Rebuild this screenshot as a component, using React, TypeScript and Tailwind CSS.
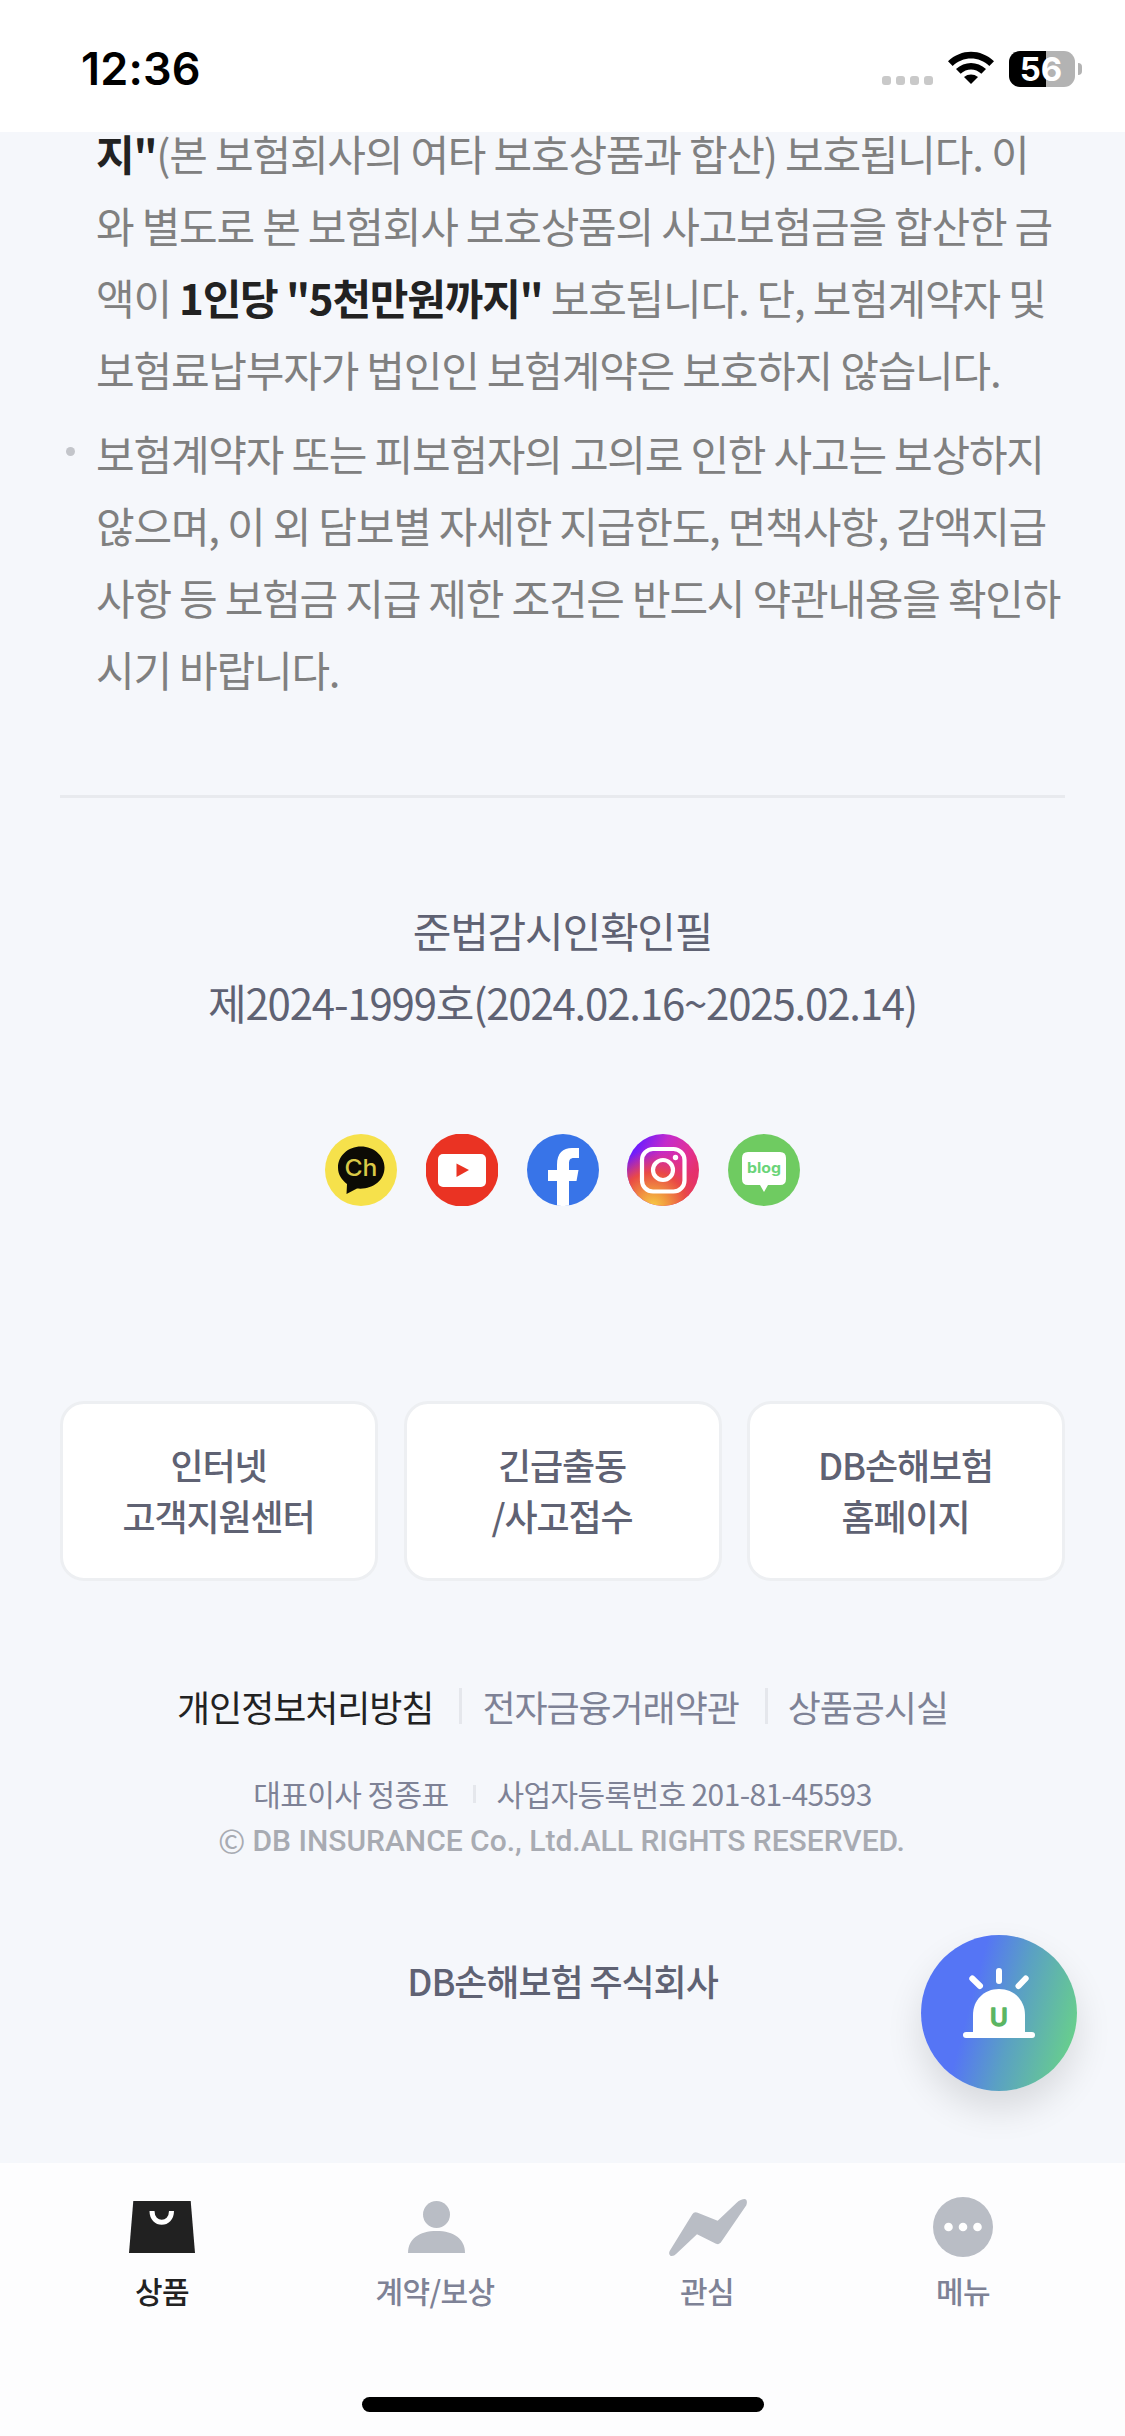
import { ReactNode } from "react";

const links = ["인터넷\n고객지원센터", "긴급출동\n/사고접수", "DB손해보험\n홈페이지"];

const StatusBar = () => (
  <header className="h-[132px] shrink-0 bg-white flex items-start justify-between pl-[81px] pr-[43px] pt-[42px]">
    <span className="font-[Inter,sans-serif] text-[45px] leading-[54px] font-semibold text-black tracking-[0.2px]">
      12:36
    </span>
    <div className="flex items-start pt-[9px]">
      <div className="flex gap-[5px] mt-[25px] mr-[15px]">
        {[0, 1, 2, 3].map((dot) => (
          <span key={dot} className="size-[9px] rounded-[3px] bg-[#c9c9c9]" />
        ))}
      </div>
      {/* Wi-Fi */}
      <svg className="w-[46px] h-[34px] mr-[15px]" viewBox="0 0 138 102">
        <path d="M0 31C40-7 98-7 138 31L124 45C94 15 44 15 14 45Z" />
        <path d="M24 54C50 30 88 30 114 54L100 68C82 51 56 51 38 68Z" />
        <path d="M48 78C61 68 77 68 90 78L69 99Z" />
      </svg>
      {/* Bateria */}
      <div className="w-[66px] h-[36px] rounded-[11px] bg-[linear-gradient(90deg,#000_56%,#b3b3b3_56%)] flex items-center justify-center">
        <span className="font-[Inter,sans-serif] font-bold text-[33px] leading-none text-white pr-[2px]">
          56
        </span>
      </div>
      <span className="w-[4px] h-[12px] mt-[12px] ml-[3px] rounded-r-full bg-[#b3b3b3]" />
    </div>
  </header>
);

const KakaoIcon = () => (
  <svg className="size-[72px]" viewBox="0 0 72 72">
    <circle cx="36" cy="36" r="36" fill="#f6e14b" />
    <path
      d="M36 12.500C23 12.500 13 22 13 33.500C13 41 17 46 22 50L21.500 60L32 54.500C47 56 59.500 47 59.500 33.500C59.500 22 49 12.500 36 12.500Z"
      fill="#0c0b05"
    />
    <text
      x="19.500"
      y="41.500"
      textLength="33"
      lengthAdjust="spacingAndGlyphs"
      className="font-[Inter,sans-serif] font-medium text-[23px]"
      fill="#d9c947"
    >
      Ch
    </text>
  </svg>
);

const YoutubeIcon = () => (
  <svg className="size-[72px]" viewBox="0 0 72 72">
    <circle cx="36" cy="36" r="36.500" fill="#ea3323" />
    <rect x="12" y="20" width="48" height="33" rx="5" fill="#fff" />
    <path d="M30.500 29.500L43 36L30.500 43Z" fill="#ea3323" />
  </svg>
);

const FacebookIcon = () => (
  <svg className="size-[72px]" viewBox="0 0 72 72">
    <circle cx="36" cy="36" r="36" fill="#3874e8" />
    <path
      d="M30 71.500V47H21V36H30V31C30 19 36 14 45 14H52V24H47C43 24 42 26 42 30V36H51.500L49.500 47H42V71.500C38 72.200 34 72.200 30 71.500Z"
      fill="#fff"
    />
  </svg>
);

const InstagramIcon = () => (
  <svg className="size-[72px]" viewBox="0 0 72 72">
    <defs>
      <linearGradient id="igBase" x1="0.1" y1="0.2" x2="0.9" y2="0.6">
        <stop offset="0" stopColor="#6a1cff" />
        <stop offset="0.4" stopColor="#c42bcb" />
        <stop offset="0.75" stopColor="#e0309b" />
        <stop offset="1" stopColor="#e5306c" />
      </linearGradient>
      <radialGradient id="igWarm" cx="0.36" cy="1" r="0.78">
        <stop offset="0" stopColor="#f7cb45" />
        <stop offset="0.25" stopColor="#f1993f" />
        <stop offset="0.6" stopColor="#e94a45" />
        <stop offset="1" stopColor="#e2306f" stopOpacity="0" />
      </radialGradient>
    </defs>
    <circle cx="36" cy="36" r="36" fill="url(#igBase)" />
    <circle cx="36" cy="36" r="36" fill="url(#igWarm)" />
    <rect x="15" y="15" width="42.500" height="42.500" rx="11" fill="none" stroke="#fff" strokeWidth="4.200" />
    <circle cx="36" cy="36" r="10" fill="none" stroke="#fff" strokeWidth="4.200" />
    <circle cx="48.500" cy="23.500" r="2.700" fill="#fff" />
  </svg>
);

const BlogIcon = () => (
  <svg className="size-[72px]" viewBox="0 0 72 72">
    <circle cx="36" cy="36" r="36" fill="#6fcb61" />
    <path
      d="M20 18H52Q58 18 58 24V45Q58 51 52 51H40L36 58L32 51H20Q14 51 14 45V24Q14 18 20 18Z"
      fill="#fff"
    />
    <text
      x="19"
      y="38.500"
      textLength="34"
      lengthAdjust="spacingAndGlyphs"
      className="font-[Inter,sans-serif] font-bold text-[14px]"
      fill="#6bd479"
    >
      blog
    </text>
  </svg>
);

const SirenIcon = () => (
  <svg className="w-[72px] h-[70px]" viewBox="0 0 72 70" fill="#fff" stroke="#fff" strokeLinecap="round">
    <path d="M36 3V13" strokeWidth="6" />
    <path d="M9.300 10.500L17 18" strokeWidth="6" />
    <path d="M62.700 10.500L55.500 18" strokeWidth="6" />
    <path d="M10 66V47C10 32 21 21 36 21S62 32 62 47V66Z" stroke="none" />
    <path d="M3 67H69" strokeWidth="6" />
    <text
      x="36"
      y="58"
      textAnchor="middle"
      className="font-[Inter,sans-serif] font-medium text-[24px]"
      fill="#5bb562"
      stroke="#5bb562"
      strokeWidth="1.600"
      strokeLinejoin="round"
    >
      U
    </text>
  </svg>
);

const BagIcon = () => (
  <svg className="w-[66px] h-[52px]" viewBox="0 0 66 52">
    <path d="M4.300 0H61.700L66 52H0Z" fill="#212121" />
    <path d="M23 10C23 25 42.500 25 42.500 10" fill="none" stroke="#fff" strokeWidth="5" />
  </svg>
);

const UserIcon = () => (
  <svg className="w-[57px] h-[52px] ml-[2px]" viewBox="0 0 57 52" fill="#b9bdc5">
    <circle cx="28.500" cy="13.500" r="13.500" />
    <path d="M0 52C0 38 11 30 28.500 30S57 38 57 52Z" />
  </svg>
);

const InterestIcon = () => (
  <svg className="w-[78px] h-[57px] ml-[2px]" viewBox="0 0 234 171" fill="#b9bdc5">
    <path d="M2 156L70 46Q75 37 86 41L146 65L203 11Q215 0 228 0Q237 3 232 19L158 127Q152 139 141 134L84 106L22 164Q13 173 4 170Q-2 166 2 156Z" />
  </svg>
);

const MenuIcon = () => (
  <svg className="size-[60px]" viewBox="0 0 60 60">
    <circle cx="30" cy="30" r="30" fill="#b9bdc5" />
    <circle cx="15.500" cy="30" r="4.300" fill="#fff" />
    <circle cx="30" cy="30" r="4.300" fill="#fff" />
    <circle cx="44.500" cy="30" r="4.300" fill="#fff" />
  </svg>
);

const Tab = ({ icon, label, active }: { icon: ReactNode; label: string; active?: boolean }) => (
  <div className="flex flex-col items-center">
    <div className="h-[60px] flex items-center justify-center">{icon}</div>
    <span
      className={
        active
          ? "mt-[11px] text-[30px] leading-[45px] tracking-[-0.02em] font-medium text-[#222222]"
          : "mt-[11px] text-[30px] leading-[45px] tracking-[-0.02em] font-medium text-[#7e8296]"
      }
    >
      {label}
    </span>
  </div>
);

const App = () => {
  return (
    <div className="w-[1125px] h-[2436px] overflow-hidden flex flex-col bg-[#fdfdfe] font-['Noto_Sans_CJK_KR',sans-serif]">
      <StatusBar />
      <main className="relative h-[2031px] shrink-0 bg-[#f5f7fb] px-[60px] flex flex-col">
        {/* Avisos do seguro */}
        <ul className="-mt-[15px] pl-[36px] flex flex-col gap-[12px] text-[42px] leading-[72px] tracking-[-1.2px] text-[#808080] whitespace-nowrap">
          <li>
            <b className="text-[#222222]">지"</b>(본 보험회사의 여타 보호상품과 합산) 보호됩니다. 이
            <br />
            와 별도로 본 보험회사 보호상품의 사고보험금을 합산한 금
            <br />
            액이 <b className="text-[#222222]">1인당 "5천만원까지"</b> 보호됩니다. 단, 보험계약자 및
            <br />
            보험료납부자가 법인인 보험계약은 보호하지 않습니다.
          </li>
          <li className="flex -ml-[30px]">
            <span className="size-[9px] shrink-0 mt-[30px] mr-[21px] rounded-full bg-[#c3c5ca]" />
            <p>
              보험계약자 또는 피보험자의 고의로 인한 사고는 보상하지
              <br />
              않으며, 이 외 담보별 자세한 지급한도, 면책사항, 감액지급
              <br />
              사항 등 보험금 지급 제한 조건은 반드시 약관내용을 확인하
              <br />
              시기 바랍니다.
            </p>
          </li>
        </ul>
        <hr className="mt-[90px] border-0 h-[3px] bg-[#e8eaee]" />
        <p className="mt-[96px] text-[42px] leading-[72px] tracking-[-1.2px] text-[#5f6273] text-center">
          준법감시인확인필
          <br />
          제2024-1999호(2024.02.16~2025.02.14)
        </p>
        {/* Redes sociais */}
        <div className="mt-[96px] flex justify-center gap-[28.75px]">
          <KakaoIcon />
          <YoutubeIcon />
          <FacebookIcon />
          <InstagramIcon />
          <BlogIcon />
        </div>
        <div className="mt-[195px] grid grid-cols-3 gap-[25.5px]">
          {links.map((link) => (
            <button
              key={link}
              className="h-[180px] pb-[3px] pr-[1px] rounded-[24px] border-3 border-[#edeff2] bg-white text-[36px] leading-[51px] font-medium text-[#5f6273] tracking-[-0.03em] whitespace-pre-line"
            >
              {link}
            </button>
          ))}
        </div>
        {/* Rodapé */}
        <div className="mt-[98px] flex items-center justify-center text-[36px] leading-[54px] tracking-[-0.03em] text-[#7e8296]">
          <span className="text-[#222222]">개인정보처리방침</span>
          <span className="w-[3px] h-[36px] ml-[26px] mr-[20px] bg-[#e5e7ec]" />
          <span>전자금융거래약관</span>
          <span className="w-[3px] h-[36px] ml-[26px] mr-[20px] bg-[#e5e7ec]" />
          <span>상품공시실</span>
        </div>
        <div className="mt-[38px] flex items-center justify-center text-[30px] leading-[45px] tracking-[-0.02em] text-[#7e8296]">
          <span>대표이사 정종표</span>
          <span className="w-[3px] h-[18px] ml-[25px] mr-[20px] bg-[#e5e7ec]" />
          <span>사업자등록번호 201-81-45593</span>
        </div>
        <div className="mt-[2px] flex justify-center gap-[7px] pr-[2px] text-[30px] leading-[45px] text-[#a8abb2]">
          <span className="text-[33px]">©</span>
          <span className="font-[Roboto,sans-serif] font-medium">
            DB INSURANCE Co., Ltd.ALL RIGHTS RESERVED.
          </span>
        </div>
        <p className="mt-[90px] text-[36px] leading-[54px] tracking-[-0.03em] font-medium text-[#5f6273] text-center">
          DB손해보험 주식회사
        </p>
        <button className="absolute right-[48px] bottom-[72px] size-[156px] rounded-full bg-[linear-gradient(105deg,#5575f5_34%,#5aa0c4_58%,#68cf8c_92%)] shadow-[0_18px_36px_rgba(0,0,0,0.12)] flex justify-center pt-[33px]">
          <SirenIcon />
        </button>
      </main>
      <nav className="grid grid-cols-[273px_273px_271px_241px] pl-[25.5px] pt-[34px]">
        <Tab icon={<BagIcon />} label="상품" active />
        <Tab icon={<UserIcon />} label="계약/보상" />
        <Tab icon={<InterestIcon />} label="관심" />
        <Tab icon={<MenuIcon />} label="메뉴" />
      </nav>
      <div className="w-[402px] h-[15px] mt-[84px] mx-auto rounded-full bg-black shrink-0" />
    </div>
  );
};

export default App;
